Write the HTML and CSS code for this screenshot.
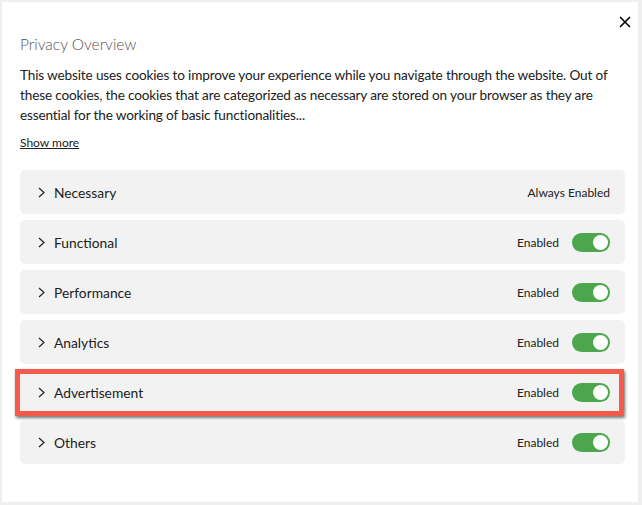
FILE: index.html
```html
<!DOCTYPE html>
<html lang="en">
<head>
<meta charset="utf-8">
<title>Privacy Overview</title>
<link rel="stylesheet" href="styles.css">
</head>
<body>
<div class="modal">
  <div class="close-row">
    <button class="close" aria-label="Close">
      <svg width="12" height="12" viewBox="0 0 12 12"><path d="M1 1L11 11M11 1L1 11" stroke="#000" stroke-width="1.6" fill="none"/></svg>
    </button>
  </div>
  <h2 class="title">Privacy Overview</h2>
  <p class="desc">This website uses cookies to improve your experience while you navigate through the website. Out of these cookies, the cookies that are categorized as necessary are stored on your browser as they are essential for the working of basic functionalities...</p>
  <a class="more" href="#">Show more</a>
  <div class="list">
    <div class="row">
      <div class="left"><svg class="chev" width="7" height="11" viewBox="0 0 7 11"><path d="M1 1L6 5.5L1 10" stroke="#222" stroke-width="1.2" fill="none"/></svg><span class="label">Necessary</span></div>
      <span class="status">Always Enabled</span>
    </div>
    <div class="row">
      <div class="left"><svg class="chev" width="7" height="11" viewBox="0 0 7 11"><path d="M1 1L6 5.5L1 10" stroke="#222" stroke-width="1.2" fill="none"/></svg><span class="label">Functional</span></div>
      <div class="right"><span class="status">Enabled</span><span class="toggle"><span class="knob"></span></span></div>
    </div>
    <div class="row">
      <div class="left"><svg class="chev" width="7" height="11" viewBox="0 0 7 11"><path d="M1 1L6 5.5L1 10" stroke="#222" stroke-width="1.2" fill="none"/></svg><span class="label">Performance</span></div>
      <div class="right"><span class="status">Enabled</span><span class="toggle"><span class="knob"></span></span></div>
    </div>
    <div class="row">
      <div class="left"><svg class="chev" width="7" height="11" viewBox="0 0 7 11"><path d="M1 1L6 5.5L1 10" stroke="#222" stroke-width="1.2" fill="none"/></svg><span class="label">Analytics</span></div>
      <div class="right"><span class="status">Enabled</span><span class="toggle"><span class="knob"></span></span></div>
    </div>
    <div class="row highlighted">
      <div class="left"><svg class="chev" width="7" height="11" viewBox="0 0 7 11"><path d="M1 1L6 5.5L1 10" stroke="#222" stroke-width="1.2" fill="none"/></svg><span class="label">Advertisement</span></div>
      <div class="right"><span class="status">Enabled</span><span class="toggle"><span class="knob"></span></span></div>
      <span class="mark"></span>
    </div>
    <div class="row">
      <div class="left"><svg class="chev" width="7" height="11" viewBox="0 0 7 11"><path d="M1 1L6 5.5L1 10" stroke="#222" stroke-width="1.2" fill="none"/></svg><span class="label">Others</span></div>
      <div class="right"><span class="status">Enabled</span><span class="toggle"><span class="knob"></span></span></div>
    </div>
  </div>
</div>
</body>
</html>
```
FILE: styles.css
```css
html, body {
  margin: 0;
  padding: 0;
}
body {
  background: #efefef;
  font-family: Lato, "Liberation Sans", sans-serif;
  color: #212121;
  padding: 2px 4px 3px 2px;
}
.modal {
  background: #fff;
  height: 500px;
  box-sizing: border-box;
  padding: 12px 13px 0 18px;
}
.close-row {
  display: flex;
  justify-content: flex-end;
  margin-right: -8px;
}
.close {
  width: 16px;
  height: 16px;
  padding: 0;
  border: 0;
  background: none;
  display: flex;
  align-items: center;
  justify-content: center;
}
.title {
  margin: 4px 0 0;
  font-size: 15.5px;
  line-height: 20px;
  font-weight: 300;
  color: #555;
}
.desc {
  margin: 11px 0 0;
  font-size: 13.6px;
  letter-spacing: -0.15px;
  line-height: 20px;
  color: #212121;
}
.more {
  display: inline-block;
  margin-top: 10px;
  font-size: 12px;
  line-height: 16px;
  color: #212121;
  text-decoration: underline;
}
.list {
  margin-top: 19px;
  display: flex;
  flex-direction: column;
  gap: 6px;
}
.row {
  position: relative;
  height: 44px;
  background: #f2f2f2;
  border-radius: 5px;
  display: flex;
  align-items: center;
  justify-content: space-between;
  padding: 0 15px 0 18px;
}
.left {
  display: flex;
  align-items: center;
}
.chev {
  margin-right: 9px;
}
.label {
  font-size: 13.8px;
}
.right {
  display: flex;
  align-items: center;
  gap: 13px;
}
.status {
  font-size: 12px;
}
.toggle {
  width: 38px;
  height: 19px;
  border-radius: 10px;
  background: #4ca64c;
  display: flex;
  align-items: center;
  justify-content: flex-end;
  padding-right: 2px;
  box-sizing: border-box;
}
.knob {
  width: 15px;
  height: 15px;
  border-radius: 50%;
  background: #fff;
}
.mark {
  position: absolute;
  left: -5px;
  top: -1px;
  right: 1px;
  bottom: -2px;
  border: 5px solid #f55a4c;
  box-shadow: 1px 2px 3px rgba(0, 0, 0, 0.55);
  pointer-events: none;
}
```
